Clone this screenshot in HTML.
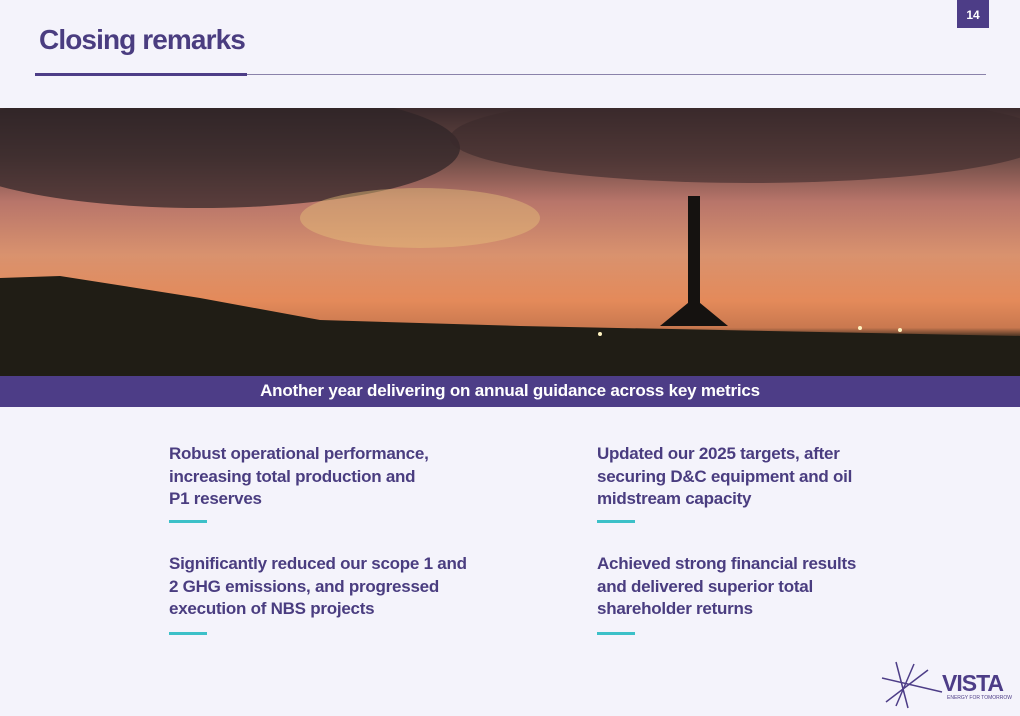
<!DOCTYPE html>
<html><head><style>
body{margin:0;width:1020px;height:716px;background:#f4f3fb;position:relative;overflow:hidden;font-family:"Liberation Sans",sans-serif}
.t{position:absolute;left:39px;top:24px;font-size:28px;font-weight:bold;color:#4a3d80;letter-spacing:-0.9px}
.pg{position:absolute;left:957px;top:0;width:32px;height:28px;background:#4d3d87;color:#fff;font-size:12px;font-weight:bold;text-align:center;line-height:30px}
.l1{position:absolute;left:35px;top:73px;width:212px;height:3px;background:#4d3d87}
.l2{position:absolute;left:247px;top:74px;width:739px;height:1px;background:#8a82aa}
.ph{position:absolute;left:0;top:108px;width:1020px;height:268px;background:linear-gradient(180deg,#3a2a2c 0%,#6b4a45 18%,#b8756a 35%,#d9926e 55%,#e48a5a 72%,#c9784f 82%,#2a2218 86%,#1f1c14 100%);overflow:hidden}
.band{position:absolute;left:0;top:376px;width:1020px;height:31px;background:#4d3d87;color:#fff;font-weight:bold;font-size:17px;text-align:center;line-height:30px;letter-spacing:-0.2px}
.c{position:absolute;font-size:17px;font-weight:bold;color:#4a3d80;line-height:22.5px;letter-spacing:-0.25px}
.d{position:absolute;width:38px;height:3px;background:#3cc0c8}
</style></head><body>
<div class="t">Closing remarks</div>
<div class="pg">14</div>
<div class="l1"></div><div class="l2"></div>
<div class="ph">
<svg width="1020" height="268" style="position:absolute;left:0;top:0">
<ellipse cx="200" cy="40" rx="260" ry="60" fill="#2e2326" opacity=".7"/>
<ellipse cx="750" cy="30" rx="300" ry="45" fill="#3b2a2c" opacity=".6"/>
<ellipse cx="420" cy="110" rx="120" ry="30" fill="#e6c07a" opacity=".45"/>
<path d="M0 170 L60 168 L200 190 L320 212 L520 218 L1020 228 L1020 268 L0 268Z" fill="#201d15"/>
<rect x="688" y="88" width="12" height="130" fill="#151210"/>
<path d="M660 218 L694 190 L728 218Z" fill="#151210"/>
<circle cx="600" cy="226" r="2" fill="#fff3c0"/><circle cx="860" cy="220" r="2" fill="#fff3c0"/><circle cx="900" cy="222" r="2" fill="#fff3c0"/>
</svg>
</div>
<div class="band">Another year delivering on annual guidance across key metrics</div>
<div class="c" style="left:169px;top:443px">Robust operational performance,<br>increasing total production and<br>P1 reserves</div>
<div class="c" style="left:597px;top:443px">Updated our 2025 targets, after<br>securing D&amp;C equipment and oil<br>midstream capacity</div>
<div class="c" style="left:169px;top:553px">Significantly reduced our scope 1 and<br>2 GHG emissions, and progressed<br>execution of NBS projects</div>
<div class="c" style="left:597px;top:553px">Achieved strong financial results<br>and delivered superior total<br>shareholder returns</div>
<div class="d" style="left:169px;top:520px"></div><div class="d" style="left:597px;top:520px"></div>
<div class="d" style="left:169px;top:632px"></div><div class="d" style="left:597px;top:632px"></div>
<svg style="position:absolute;left:878px;top:660px" width="70" height="50"><g stroke="#4d3d87" stroke-width="1.5"><line x1="4" y1="18" x2="64" y2="32"/><line x1="18" y1="2" x2="30" y2="48"/><line x1="36" y1="4" x2="18" y2="46"/><line x1="8" y1="42" x2="50" y2="10"/></g></svg>
<div style="position:absolute;left:942px;top:670px;font-size:23px;font-weight:bold;color:#4d3d87;letter-spacing:-1px">VISTA</div>
<div style="position:absolute;left:947px;top:695px;font-size:5px;color:#4d3d87;white-space:nowrap">ENERGY FOR TOMORROW</div>
</body></html>
